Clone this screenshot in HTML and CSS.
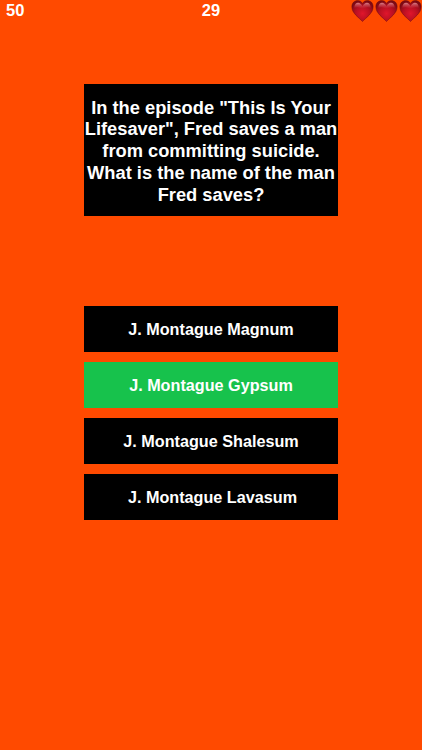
FILE: index.html
```html
<!DOCTYPE html>
<html lang="en">
<head>
  <meta charset="UTF-8">
  <meta name="viewport" content="width=device-width, initial-scale=1.0">
  <title>Trivia Quiz</title>
  <link rel="stylesheet" href="styles.css">
</head>
<body>
  <svg class="defs" width="0" height="0" aria-hidden="true">
    <defs>
      <radialGradient id="heartFill" cx="0.5" cy="0.62" r="0.62">
        <stop offset="0" stop-color="#e0162c"/>
        <stop offset="0.55" stop-color="#b80f22"/>
        <stop offset="1" stop-color="#7c0a14"/>
      </radialGradient>
      <linearGradient id="heartShine" x1="0" y1="0" x2="0" y2="1">
        <stop offset="0" stop-color="#f0a0a8" stop-opacity=".8"/>
        <stop offset="1" stop-color="#d03040" stop-opacity=".1"/>
      </linearGradient>
      <symbol id="heart" viewBox="0 0 24 24">
        <path d="M12 23.500C8 19 .4 14.500 .4 7.500 .4 3 3.400 .6 6.800 .6c2.300 0 4.200 1.200 5.200 3.200 1-2 2.900-3.200 5.200-3.200 3.400 0 6.400 2.400 6.400 6.900C23.600 14.500 16 19 12 23.500z" fill="url(#heartFill)" stroke="#6a0a12" stroke-width=".5"/>
        <path d="M3 8.500C3 5 5 3 7.200 3c1.800 0 3.400 1.300 4.800 3.800C13.400 4.300 15 3 16.800 3 19 3 21 5 21 8.500 18 7.300 15 7.600 12 9.500 9 7.600 6 7.300 3 8.500z" fill="url(#heartShine)"/>
      </symbol>
    </defs>
  </svg>

  <div class="status-bar">
    <span class="score">50</span>
    <span class="timer">29</span>
    <div class="lives">
      <svg class="heart"><use href="#heart"/></svg>
      <svg class="heart"><use href="#heart"/></svg>
      <svg class="heart"><use href="#heart"/></svg>
    </div>
  </div>

  <div class="quiz">
    <div class="question">In the episode "This Is Your<br>Lifesaver", Fred saves a man<br>from committing suicide.<br>What is the name of the man<br>Fred saves?</div>

    <div class="answers">
      <div class="answer">J. Montague Magnum</div>
      <div class="answer correct">J. Montague Gypsum</div>
      <div class="answer">J. Montague Shalesum</div>
      <div class="answer nudged">J. Montague Lavasum</div>
    </div>
  </div>
</body>
</html>
```

FILE: styles.css
```css
html, body {
  height: 100%;
}
body {
  font-family: "Liberation Sans", Arial, sans-serif;
  font-weight: bold;
  margin: 0;
  padding: 0;
  background-color: #ff4a00;
  color: #fff;
  overflow: hidden;
}
.defs {
  display: block;
  height: 0;
}
.status-bar {
  display: grid;
  grid-template-columns: 1fr auto 1fr;
  align-items: start;
  height: 22px;
  font-size: 16.500px;
  line-height: 21px;
}
.score {
  justify-self: start;
  margin-left: 6px;
}
.timer {
  justify-self: center;
}
.lives {
  justify-self: end;
  display: flex;
  gap: 1px;
}
.heart {
  width: 23px;
  height: 22px;
}
.quiz {
  width: 254px;
  margin: 62px auto 0;
}
.question {
  background-color: #000;
  box-sizing: border-box;
  height: 132px;
  padding-top: 2px;
  display: flex;
  align-items: center;
  justify-content: center;
  text-align: center;
  font-size: 18.300px;
  line-height: 21.700px;
  white-space: nowrap;
}
.answers {
  display: flex;
  flex-direction: column;
  gap: 10px;
  margin-top: 90px;
}
.answer {
  background-color: #000;
  height: 46px;
  display: flex;
  align-items: center;
  justify-content: center;
  font-size: 16.200px;
}
.answer.correct {
  background-color: #17c24c;
}
.answer.nudged {
  padding-left: 3px;
}
```
